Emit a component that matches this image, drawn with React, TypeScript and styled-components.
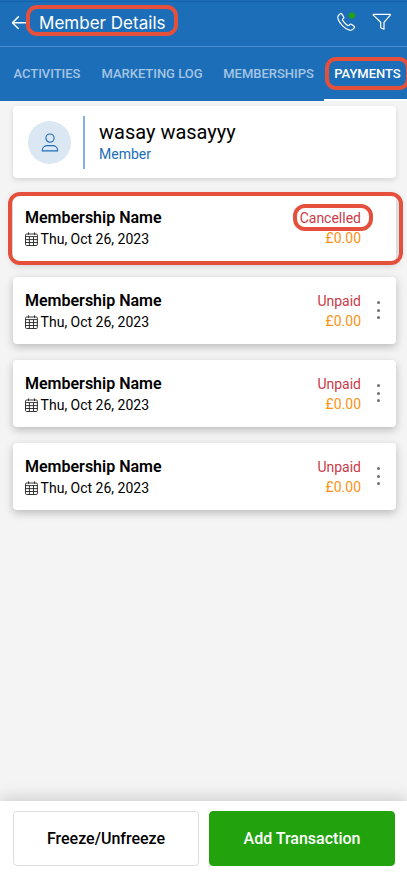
import React from "react";
import styled, { createGlobalStyle, css } from "styled-components";

const GlobalStyle = createGlobalStyle`
  *, *::before, *::after { box-sizing: border-box; }
  html, body { margin: 0; padding: 0; }
  body { font-family: Roboto, "Liberation Sans", sans-serif; color: #000; overflow: hidden; }
`;

const Screen = styled.div`
  width: 407px;
  height: 875px;
  display: flex;
  flex-direction: column;
  overflow: hidden;
  background: #f4f4f4;
`;

const TopBar = styled.header`
  flex: none;
  display: flex;
  align-items: center;
  height: 47px;
  padding: 0 15px 0 11px;
  color: #fff;
  background: linear-gradient(#1a6db8 1px, #155fa6 1px, #155fa6 2px, #1c6eb8 2px);
  border-bottom: 1px solid #4a8bc8;
`;

const Title = styled.h1`
  position: relative;
  flex: 1;
  margin: 0 0 0 12px;
  font: 400 17px/24px Inter, sans-serif;
  letter-spacing: 0.02px;
`;

const TopIcons = styled.div`
  display: flex;
  align-items: center;
  gap: 16px;
  padding-bottom: 2px;
  svg { display: block; }
`;

const Highlight = styled.span<{ $inset: string; $radius: number }>`
  position: absolute;
  inset: ${(p) => p.$inset};
  border: 4px solid #e5503c;
  border-radius: ${(p) => p.$radius}px;
  pointer-events: none;
  z-index: 2;
`;

const TitleHighlight = styled(Highlight)`
  width: 152px;
`;

const Tabs = styled.nav`
  flex: none;
  display: flex;
  height: 54px;
  padding-left: 3px;
  background: #1c6eb8;
`;

const Tab = styled.div<{ $active?: boolean; $width: number }>`
  position: relative;
  flex: none;
  display: flex;
  justify-content: center;
  width: ${(p) => p.$width}px;
  padding-top: 17px;
  font-size: 13px;
  font-weight: 500;
  line-height: 20px;
  letter-spacing: -0.02px;
  white-space: nowrap;
  color: #a4c5e3;
  ${(p) =>
    p.$active &&
    css`
      color: #fff;
      border-bottom: 2px solid #fff;
    `}
`;

const Content = styled.main`
  flex: 1;
  display: flex;
  flex-direction: column;
  gap: 16px;
  padding: 5px 11px 0 13px;
`;

const ProfileCard = styled.section`
  display: flex;
  align-items: center;
  height: 72px;
  padding: 0 15px;
  border-radius: 4px;
  background: #fff;
  box-shadow: 0 2px 5px rgba(0, 0, 0, 0.13);
`;

const Avatar = styled.div`
  display: grid;
  place-items: center;
  width: 43px;
  height: 43px;
  border-radius: 50%;
  background: #dbe7f3;
`;

const Divider = styled.div`
  width: 2px;
  height: 53px;
  margin: 0 14px 0 12px;
  background: #84aedb;
`;

const Person = styled.div`
  padding-bottom: 2px;
`;

const PersonName = styled.div`
  font-size: 20px;
  line-height: 26px;
`;

const Role = styled.div`
  font-size: 14px;
  line-height: 18px;
  color: #1c6eb8;
`;

const PaymentCard = styled.article`
  position: relative;
  display: flex;
  align-items: flex-start;
  height: 67px;
  padding: 14px 12px 0 12px;
  border-radius: 4px;
  background: #fff;
  box-shadow: 0 3px 9px rgba(0, 0, 0, 0.24);
`;

const Details = styled.div`
  flex: 1;
`;

const Name = styled.div`
  font-size: 16px;
  font-weight: 600;
  line-height: 19px;
`;

const DateLine = styled.div`
  display: flex;
  align-items: center;
  gap: 2.6px;
  margin-top: 2px;
  font-size: 14px;
  line-height: 20px;
`;

const Amounts = styled.div`
  text-align: right;
  font-size: 14px;
  line-height: 20px;
`;

const Status = styled.div`
  position: relative;
  color: #c93a48;
`;

const Price = styled.div`
  color: #fb9214;
`;

const MenuDots = styled.div`
  display: flex;
  flex-direction: column;
  align-items: center;
  gap: 4.5px;
  width: 12px;
  height: 20px;
  margin: 10px 0 0 11px;
`;

const Dot = styled.i`
  width: 3px;
  height: 3px;
  border-radius: 50%;
  background: #68707c;
`;

const Footer = styled.footer`
  flex: none;
  display: flex;
  gap: 10px;
  height: 74px;
  padding: 10px 12px 9px 13px;
  background: #fff;
  box-shadow: 0 -2px 16px rgba(0, 0, 0, 0.18);
`;

const Button = styled.button<{ $primary?: boolean }>`
  flex: 1;
  padding: 0;
  border: 1px solid ${(p) => (p.$primary ? "#22a30d" : "#dedede")};
  border-radius: 4px;
  font: 500 16px/20px Roboto, sans-serif;
  color: ${(p) => (p.$primary ? "#fff" : "#000")};
  background: ${(p) => (p.$primary ? "#22a30d" : "#fff")};
`;

const BackIcon = () => (
  <svg width="16" height="16" viewBox="0 0 16 16" fill="none" stroke="#fff" strokeWidth="1.5" strokeLinecap="round" strokeLinejoin="round">
    <path d="M7.3 1.9 1.5 7.7l5.8 5.8M1.7 7.7H16" />
  </svg>
);

const PhoneIcon = () => (
  <svg width="20" height="20" viewBox="0 0 20 20" fill="none" stroke="#fff" strokeWidth="1.2" strokeLinejoin="round">
    <path d="M4.1 1.8 2.4 3.5C.8 5.1 2.2 9.4 6.4 13.6S15 19.1 16.5 17.6l1.7-1.7c.5-.5.4-1.2-.1-1.6l-2.8-2c-.5-.3-1-.3-1.4.1l-1 1c-.4.4-.9.3-1.3 0-1.9-1.3-3.7-3.1-5-5-.3-.4-.3-.9 0-1.2l1-1c.4-.4.4-1 .1-1.4l-2-2.9c-.4-.6-1.1-.6-1.6-.1Z" />
    <circle cx="15.9" cy="3.5" r="3.1" fill="#22a30d" stroke="none" />
  </svg>
);

const FilterIcon = () => (
  <svg width="20" height="18" viewBox="0 0 20 18" fill="none" stroke="#fff" strokeWidth="1.2" strokeLinejoin="round">
    <path d="M1.5 1.3h16.6c.4 0 .5.5.2.8L12 9.3v6.9l-3.3-1.5V9.3L1.3 2.1c-.3-.3-.2-.8.2-.8Z" />
  </svg>
);

const PersonIcon = () => (
  <svg width="18" height="20" viewBox="0 0 18 20" fill="none" stroke="#1c6eb8" strokeWidth="1.1" strokeLinejoin="round">
    <circle cx="9" cy="6.1" r="4.1" />
    <path d="M1.3 18.9v-.8c0-2.7 2.3-4.5 5-4.5h5.3c2.7 0 5 1.8 5 4.5v.8Z" />
  </svg>
);

const CalendarIcon = () => (
  <svg width="13" height="14" viewBox="0 0 13 14" fill="none" stroke="#222" strokeWidth="0.9">
    <rect x="0.5" y="2" width="11.9" height="11.5" rx="1.2" />
    <path d="M.5 4.6h11.9M.5 7.6h11.9M.5 10.5h11.9M4.4 4.6v8.9M8.5 4.6v8.9M3.5.4v2.5M9.5.4v2.5" />
  </svg>
);

const payments = [
  { id: 1, status: "Cancelled", marked: true },
  { id: 2, status: "Unpaid", marked: false },
  { id: 3, status: "Unpaid", marked: false },
  { id: 4, status: "Unpaid", marked: false },
];

export default function App() {
  return (
    <>
      <GlobalStyle />
      <Screen>
        <TopBar>
          <BackIcon />
          <Title>
            Member Details
            <TitleHighlight $inset="-6px auto -1px -13px" $radius={11} />
          </Title>
          <TopIcons>
            <PhoneIcon />
            <FilterIcon />
          </TopIcons>
        </TopBar>
        <Tabs>
          <Tab $width={88}>ACTIVITIES</Tab>
          <Tab $width={122}>MARKETING LOG</Tab>
          <Tab $width={111}>MEMBERSHIPS</Tab>
          <Tab $active $width={87}>
            PAYMENTS
            <Highlight $inset="10px 1px 9px 1px" $radius={11} />
          </Tab>
        </Tabs>
        <Content>
          <ProfileCard>
            <Avatar>
              <PersonIcon />
            </Avatar>
            <Divider />
            <Person>
              <PersonName>wasay wasayyy</PersonName>
              <Role>Member</Role>
            </Person>
          </ProfileCard>
          {payments.map((p) => (
            <PaymentCard key={p.id}>
              <Details>
                <Name>Membership Name</Name>
                <DateLine>
                  <CalendarIcon />
                  Thu, Oct 26, 2023
                </DateLine>
              </Details>
              <Amounts>
                <Status>
                  {p.status}
                  {p.marked && <Highlight $inset="-4px -12px -3px -7px" $radius={12} />}
                </Status>
                <Price>£0.00</Price>
              </Amounts>
              <MenuDots>
                {!p.marked && (
                  <>
                    <Dot />
                    <Dot />
                    <Dot />
                  </>
                )}
              </MenuDots>
              {p.marked && <Highlight $inset="-2px -7px -4px -5px" $radius={12} />}
            </PaymentCard>
          ))}
        </Content>
        <Footer>
          <Button>Freeze/Unfreeze</Button>
          <Button $primary>Add Transaction</Button>
        </Footer>
      </Screen>
    </>
  );
}
